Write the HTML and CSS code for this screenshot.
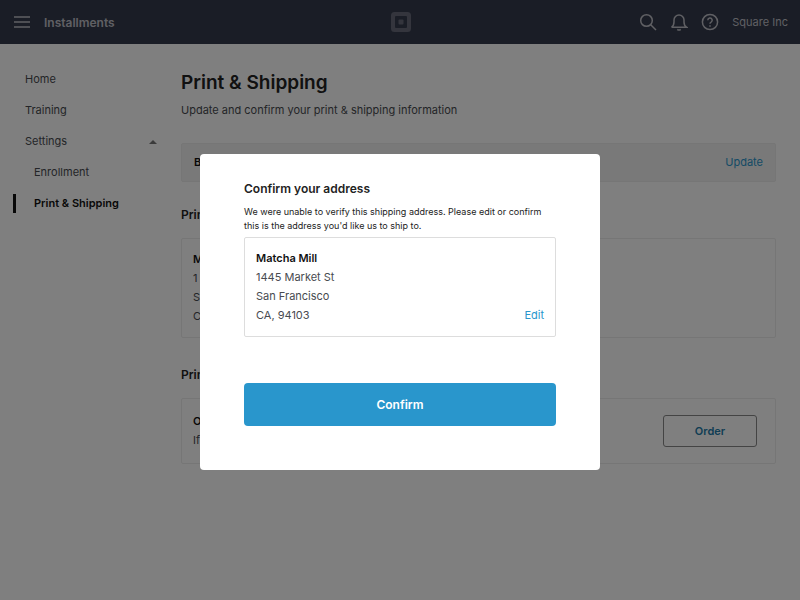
FILE: index.html
```html
<!DOCTYPE html>
<html lang="en">
<head>
<meta charset="utf-8">
<meta name="viewport" content="width=device-width, initial-scale=1">
<title>Print &amp; Shipping</title>
<link rel="stylesheet" href="styles.css">
</head>
<body>
<header class="topbar">
  <div class="topbar-side">
    <button class="icon-button" type="button" aria-label="Menu">
      <svg width="16" height="16" viewBox="0 0 16 16"><path d="M0 3h16M0 8h16M0 13h16"/></svg>
    </button>
    <span class="app-name">Installments</span>
  </div>
  <svg class="logo" width="20" height="20" viewBox="0 0 20 20" aria-hidden="true">
    <path fill-rule="evenodd" d="M3.500 0h13a3.500 3.500 0 0 1 3.500 3.500v13a3.500 3.500 0 0 1-3.500 3.500h-13a3.500 3.500 0 0 1-3.500-3.500v-13a3.500 3.500 0 0 1 3.500-3.500zM5 4a1 1 0 0 0-1 1v10a1 1 0 0 0 1 1h10a1 1 0 0 0 1-1V5a1 1 0 0 0-1-1z"/>
    <rect x="7.500" y="7.500" width="5" height="5" rx="1"/>
  </svg>
  <div class="topbar-side topbar-end">
    <button class="icon-button" type="button" aria-label="Search">
      <svg width="18" height="18" viewBox="0 0 18 18"><circle cx="7.500" cy="7.500" r="5.800"/><path d="M11.700 11.700L17 17"/></svg>
    </button>
    <button class="icon-button" type="button" aria-label="Notifications">
      <svg width="18" height="18" viewBox="0 0 18 18"><path d="M1.500 14.200h15Q14 12.500 14 9V7a5 5 0 0 0-10 0v2q0 3.500-2.500 5.200M7.300 16.300q1.700 1.400 3.400 0"/></svg>
    </button>
    <button class="icon-button" type="button" aria-label="Help">
      <svg width="18" height="18" viewBox="0 0 18 18"><circle cx="9" cy="9" r="7.600"/><path d="M6.800 7.200a2.200 2.200 0 1 1 3.300 1.900Q9 9.700 9 10.700M9 12.300v1.400"/></svg>
    </button>
    <span class="account">Square Inc</span>
  </div>
</header>
<div class="layout">
  <nav class="sidebar">
    <a class="nav-link" href="#">Home</a>
    <a class="nav-link" href="#">Training</a>
    <a class="nav-link" href="#">Settings
      <svg width="8" height="4" viewBox="0 0 8 4" aria-hidden="true"><path d="M4 0l4 4H0z"/></svg>
    </a>
    <a class="nav-link nested" href="#">Enrollment</a>
    <a class="nav-link nested current" href="#" aria-current="page">Print &amp; Shipping</a>
  </nav>
  <main class="content">
    <h1>Print &amp; Shipping</h1>
    <p class="lead">Update and confirm your print &amp; shipping information</p>
    <section class="card banner">
      <strong>B</strong>
      <a class="link" href="#">Update</a>
    </section>
    <h2>Print</h2>
    <section class="card">
      <address><strong>M</strong><br>1<br>S<br>C</address>
    </section>
    <h2>Print</h2>
    <section class="card order">
      <p><strong>O</strong><br>If</p>
      <button class="outline-button" type="button">Order</button>
    </section>
  </main>
</div>
<div class="overlay">
  <div class="dialog" role="dialog" aria-modal="true" aria-labelledby="dialog-title">
    <h2 id="dialog-title">Confirm your address</h2>
    <p class="message">We were unable to verify this shipping address. Please edit or confirm this is the address you'd like us to ship to.</p>
    <div class="card">
      <address><strong>Matcha Mill</strong><br>1445 Market St<br>San Francisco<br>CA, 94103</address>
      <a class="link" href="#">Edit</a>
    </div>
    <button class="confirm-button" type="button">Confirm</button>
  </div>
</div>
</body>
</html>
```
FILE: styles.css
```css
* { box-sizing: border-box; }
body {
  margin: 0;
  background: #fff;
  color: #484b50;
  font: 11px/19px Inter, "Liberation Sans", sans-serif;
}
h1, h2, p { margin: 0; }
a { color: inherit; text-decoration: none; }
button { font: inherit; cursor: pointer; }
address { font-style: normal; }
strong { color: #111; font-weight: 600; }

.topbar {
  display: flex;
  align-items: center;
  height: 44px;
  padding: 0 12px 0 14px;
  background: #343b4c;
  color: #c0c0c8;
}
.topbar-side { display: flex; flex: 1; align-items: center; gap: 14px; }
.topbar-end { justify-content: flex-end; gap: 13px; }
.icon-button {
  display: flex;
  padding: 0;
  border: 0;
  background: none;
  color: inherit;
}
.icon-button svg { fill: none; stroke: currentColor; stroke-width: 1.5; }
.app-name { font-size: 12px; font-weight: 600; }
.logo { fill: #686b7b; }

.layout { display: flex; padding: 0 24px 0 13px; }
.sidebar {
  display: flex;
  flex-direction: column;
  flex: 0 0 144px;
  gap: 12px;
  margin-right: 24px;
  padding-top: 26px;
}
.nav-link {
  display: flex;
  align-items: center;
  justify-content: space-between;
  padding-left: 9px;
  border-left: 3px solid transparent;
}
.nav-link svg { fill: #777; }
.nested { padding-left: 18px; }
.current { border-color: #111; color: #111; font-weight: 600; }

.content { flex: 1; padding-top: 25px; }
.content h1 { color: #222; font-size: 19px; font-weight: 600; line-height: 28px; }
.lead { margin-top: 4px; }
.card {
  display: flex;
  align-items: flex-end;
  justify-content: space-between;
  padding: 11px;
  border: 1px solid #ddd;
  border-radius: 2px;
}
.link { color: #2996cc; }
.content .card { min-height: 66px; border-color: #ececec; }
.content .banner {
  align-items: center;
  min-height: 39px;
  margin-top: 23px;
  padding: 9px 12px;
  background: #f2f2f2;
}
.content h2 {
  margin: 27px 0 13px;
  color: #222;
  font-size: 12px;
  font-weight: 600;
  line-height: 20px;
}
.content .banner + h2 { margin-top: 23px; }
.content .order { align-items: center; padding: 11px 18px 11px 11px; }
.outline-button {
  width: 94px;
  height: 32px;
  border: 1px solid #888;
  border-radius: 3px;
  background: none;
  color: #227aa8;
  font-weight: 600;
}

.overlay {
  position: fixed;
  inset: 0;
  display: flex;
  align-items: flex-start;
  justify-content: center;
  padding-top: 154px;
  background: rgb(0 0 0 / 50%);
}
.dialog {
  width: 400px;
  max-width: 100%;
  padding: 25px 44px 44px;
  border-radius: 4px;
  background: #fff;
}
.dialog h2 { color: #222; font-size: 12px; font-weight: 600; line-height: 20px; }
.message { margin: 6px 0 4px; color: #222; font-size: 9px; line-height: 14px; }
.confirm-button {
  display: block;
  width: 100%;
  height: 43px;
  margin-top: 46px;
  border: 0;
  border-radius: 4px;
  background: #2996cc;
  color: #fff;
  font-size: 12px;
  font-weight: 600;
}
```
